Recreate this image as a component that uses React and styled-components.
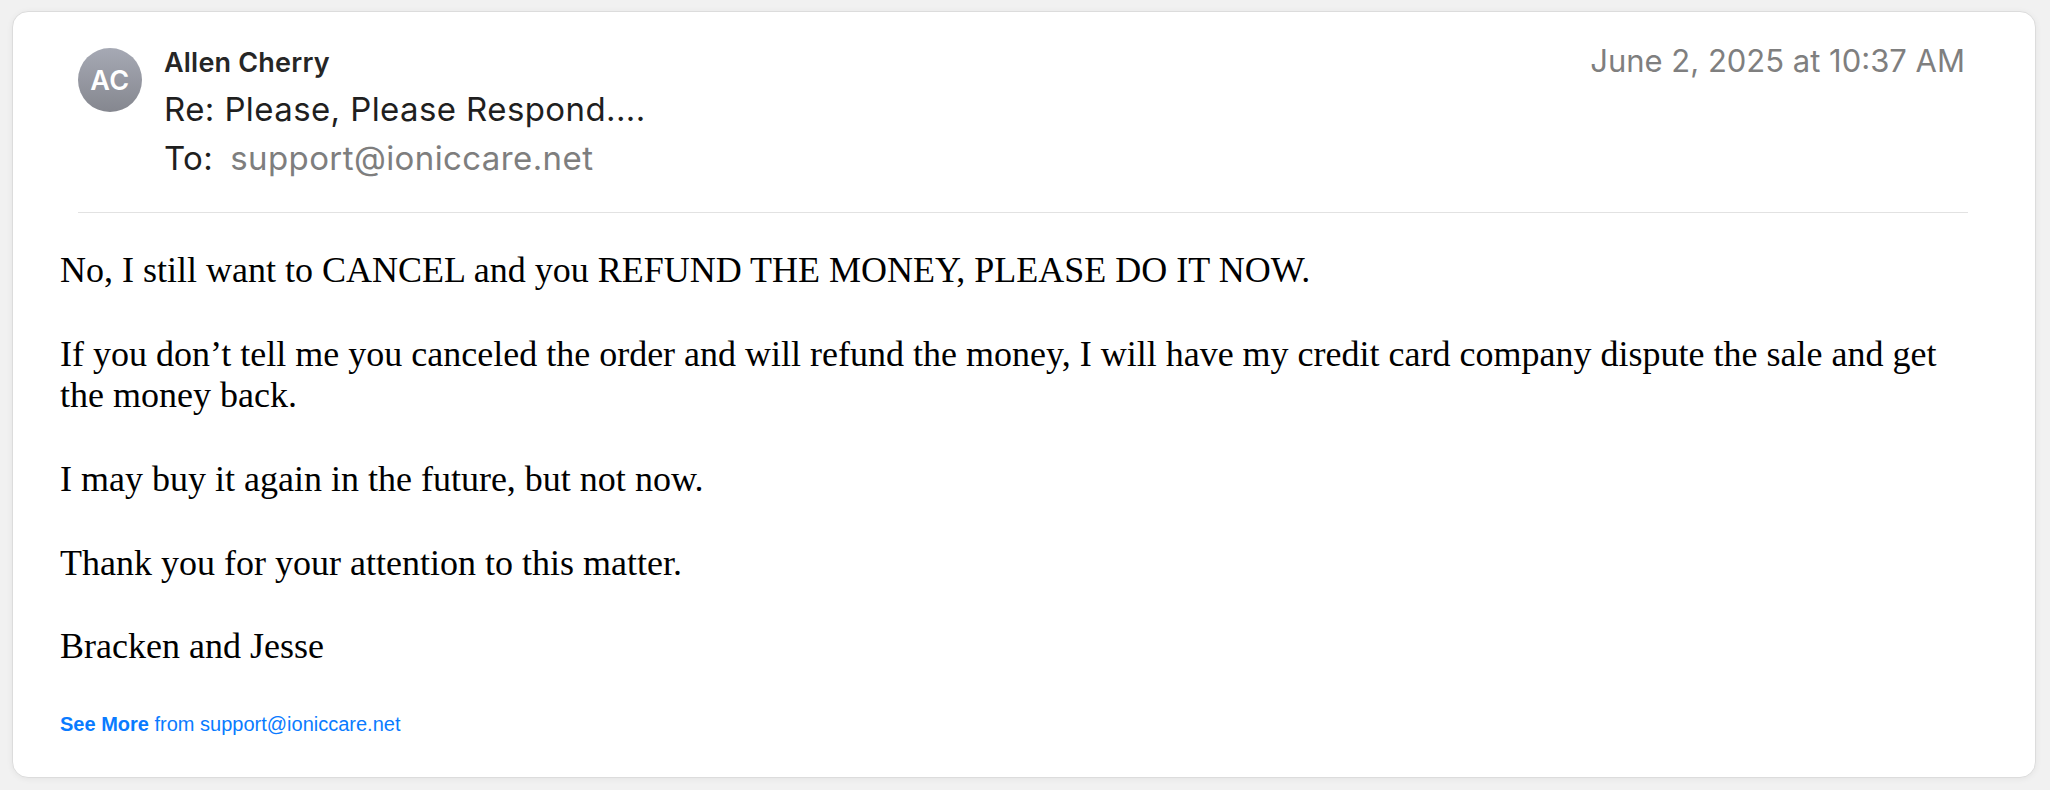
import React from 'react';
import styled, { createGlobalStyle } from 'styled-components';

const GlobalStyle = createGlobalStyle`
html, body {
    margin: 0;
    padding: 0;
    background-color: #f1f1f1;
}
body {
    font-family: Inter, "Noto Sans", sans-serif;
}
`;

const Page = styled.div`
padding: 11px 14px 12px 12px;
min-height: 790px;
box-sizing: border-box;
`;

const Card = styled.article`
background-color: white;
border: 1px solid #dcdcdc;
border-radius: 16px;
box-shadow: 0 1px 6px rgba(0, 0, 0, 0.06);
padding: 36px 0px 41px 0px;
`;

const Header = styled.header`
display: flex;
align-items: flex-start;
margin: 0px 67px 0px 65px;
padding-bottom: 31px;
border-bottom: solid 1px #e2e2e2;
`;

const Avatar = styled.div`
width: 64px;
height: 64px;
flex-shrink: 0;
border-radius: 50%;
background: linear-gradient(180deg, #a6a9b4 0%, #85878f 100%);
color: white;
display: flex;
align-items: center;
justify-content: center;
font-size: 27px;
font-weight: 600;
letter-spacing: 0.4px;
`;

const Meta = styled.div`
flex: 1;
margin-left: 22px;
display: flex;
flex-direction: column;
`;

const Sender = styled.div`
font-size: 27px;
line-height: 30px;
font-weight: 600;
letter-spacing: 0.2px;
color: #262626;
`;

const Line = styled.div`
font-size: 33px;
line-height: 46px;
letter-spacing: 0.4px;
color: #1f1f1f;
margin-top: ${props => props.gap}px;
`;

const Address = styled.span`
color: #7e7e7e;
margin-left: 17px;
`;

const DateStamp = styled.div`
font-size: 31px;
line-height: 24px;
margin: 1px 3px 0px 0px;
color: #7f7f7f;
white-space: nowrap;
`;

const Body = styled.section`
padding: 37px 75px 0px 47px;
font-family: "Liberation Serif", "Times New Roman", serif;
font-size: 36px;
line-height: 41.8px;
color: black;
`;

const Para = styled.p`
margin: 0px;
& + & {
    margin-top: 41.8px;
}
`;

const Footer = styled.div`
margin: 44px 0px 0px 47px;
font-family: "Liberation Sans", Arial, sans-serif;
font-size: 20px;
line-height: 24px;
color: #0a7bff;
`;

const SeeMore = styled.span`
font-weight: bold;
`;

function App() {
    return (
        <Page>
            <GlobalStyle />
            <Card>
                <Header>
                    <Avatar>AC</Avatar>
                    <Meta>
                        <Sender>Allen Cherry</Sender>
                        <Line gap={8}>Re: Please, Please Respond....</Line>
                        <Line gap={3}>To:<Address>support@ioniccare.net</Address></Line>
                    </Meta>
                    <DateStamp>June 2, 2025 at 10:37 AM</DateStamp>
                </Header>
                <Body>
                    <Para>No, I still want to CANCEL and you REFUND THE MONEY, PLEASE DO IT NOW.</Para>
                    <Para>If you don’t tell me you canceled the order and will refund the money, I will have my credit card company dispute the sale and get the money back.</Para>
                    <Para>I may buy it again in the future, but not now.</Para>
                    <Para>Thank you for your attention to this matter.</Para>
                    <Para>Bracken and Jesse</Para>
                </Body>
                <Footer>
                    <SeeMore>See More</SeeMore> from support@ioniccare.net
                </Footer>
            </Card>
        </Page>
    );
}

export default App;
